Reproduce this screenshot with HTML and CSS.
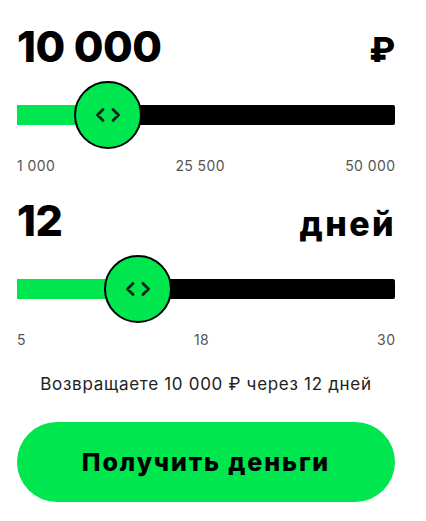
FILE: index.html
```html
<!DOCTYPE html>
<html lang="ru">
<head>
<meta charset="utf-8">
<link rel="stylesheet" href="styles.css">
</head>
<body>
<div class="calc">
  <section class="group">
    <div class="head">
      <span class="value">10 000</span>
      <span class="unit">₽</span>
    </div>
    <div class="slider">
      <div class="track"><div class="fill" style="width: 91px"></div></div>
      <div class="thumb" style="left: 57px">
        <svg width="26" height="16" viewBox="0 0 26 16"><path d="M8 2.5 L2.5 8 L8 13.5 M18 2.5 L23.5 8 L18 13.5" fill="none" stroke="#0a2a12" stroke-width="2.8" stroke-linecap="round" stroke-linejoin="round"/></svg>
      </div>
    </div>
    <div class="marks"><span>1 000</span><span>25 500</span><span>50 000</span></div>
  </section>
  <section class="group">
    <div class="head">
      <span class="value">12</span>
      <span class="unit unit-days">дней</span>
    </div>
    <div class="slider">
      <div class="track"><div class="fill" style="width: 121px"></div></div>
      <div class="thumb" style="left: 87px">
        <svg width="26" height="16" viewBox="0 0 26 16"><path d="M8 2.5 L2.5 8 L8 13.5 M18 2.5 L23.5 8 L18 13.5" fill="none" stroke="#0a2a12" stroke-width="2.8" stroke-linecap="round" stroke-linejoin="round"/></svg>
      </div>
    </div>
    <div class="marks"><span>5</span><span>18</span><span>30</span></div>
  </section>
  <p class="summary">Возвращаете 10 000 ₽ через 12 дней</p>
  <button class="cta">Получить деньги</button>
</div>
</body>
</html>
```
FILE: styles.css
```css
* { box-sizing: border-box; }
html, body { margin: 0; padding: 0; background: #fff; }
body { font-family: "Inter", "DejaVu Sans", sans-serif; color: #000; }
.calc { width: 378px; margin-left: 17px; padding-top: 18px; display: flex; flex-direction: column; }
.group { display: flex; flex-direction: column; }
.head { display: flex; justify-content: space-between; align-items: baseline; height: 56px; }
.value { font-size: 43px; font-weight: 800; letter-spacing: -0.5px; line-height: 56px; }
.unit { font-size: 34px; font-weight: 800; line-height: 56px; }
.unit-days { letter-spacing: 2.4px; margin-right: -1px; }
.slider { position: relative; height: 68px; margin-top: 7px; display: flex; align-items: center; }
.track { width: 100%; height: 20px; background: #000; border-radius: 2px; overflow: hidden; }
.fill { height: 100%; background: #00e64f; }
.thumb { position: absolute; top: 0; width: 68px; height: 68px; border-radius: 50%; background: #00e64f; border: 2px solid #000; display: flex; align-items: center; justify-content: center; }
.marks { display: flex; justify-content: space-between; font-size: 14px; color: #555; margin-top: 8px; line-height: 17px; letter-spacing: 0.4px; }
.marks span:last-child { margin-right: -0.4px; }
.group + .group { margin-top: 18px; }
.summary { margin: 26px 0 0; text-align: center; font-size: 17px; color: #222; line-height: 20px; letter-spacing: 0.7px; }
.cta { margin-top: 28px; height: 80px; border: none; border-radius: 40px; background: #00e64f; font-family: inherit; font-size: 25px; font-weight: 800; color: #000; letter-spacing: 1.9px; width: 100%; }
```
